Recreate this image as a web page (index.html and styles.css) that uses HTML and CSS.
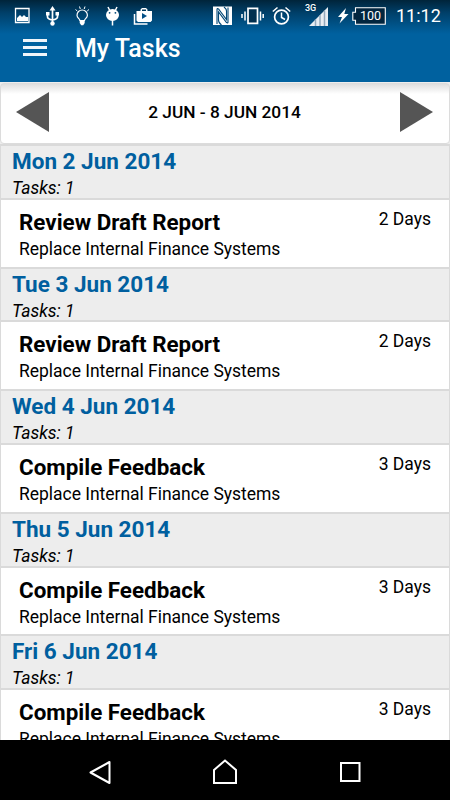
FILE: index.html
```html
<!DOCTYPE html>
<html lang="en">
<head>
    <meta charset="UTF-8">
    <meta name="viewport" content="width=device-width, initial-scale=1.0">
    <title>My Tasks</title>
    <link rel="stylesheet" href="styles.css">
</head>
<body>
    <header class="header">
        <!-- Status bar -->
        <div class="status-bar">
            <svg width="30" height="32" viewBox="0 0 30 32">
                <path d="M8.5 8.5h13.5v14h-13.5z" fill="none" stroke="#fff" stroke-width="1.3"/>
                <path d="M10 21v-3l3-3 2 2 2-2 2 2h2v4z" fill="#fff"/>
            </svg>
            <svg width="30" height="32" viewBox="0 0 30 32">
                <path d="M15.5 9v14M10.5 13v4q0 2 5 3q5-1 5-3v-4" fill="none" stroke="#fff" stroke-width="1.7"/>
                <path d="M15.5 6l3 4.5h-6zM9 12h3.5v3.5h-3.5zM18.5 12h3.5v3.5h-3.5z" fill="#fff"/>
                <circle cx="15.5" cy="23.5" r="2.2" fill="#fff"/>
            </svg>
            <svg width="30" height="32" viewBox="0 0 30 32">
                <path d="M12.9 20.5c0-1.5-2.9-2.5-2.9-5.3a5.2 5.2 0 0 1 10.4 0c0 2.8-2.9 3.8-2.9 5.3z" fill="none" stroke="#fff" stroke-width="1.2"/>
                <path d="M12.7 20h5v3l-1.5 2.2h-2l-1.5-2.2z" fill="#fff"/>
                <path d="M12.5 6.5l.8 2.5M18 6.5l-.8 2.5M8.5 9.5l1.8 1.5M22 9.5l-1.8 1.5" stroke="#fff" stroke-width="1"/>
            </svg>
            <svg width="30" height="32" viewBox="0 0 30 32">
                <path d="M11 7l2 4M20 7l-2 4M15.5 20v5.5" stroke="#fff" stroke-width="1.5"/>
                <ellipse cx="15.5" cy="15" rx="6.5" ry="6" fill="#fff"/>
                <circle cx="12.6" cy="12.8" r=".9" fill="#024777"/>
                <circle cx="18.4" cy="12.8" r=".9" fill="#024777"/>
            </svg>
            <svg width="30" height="32" viewBox="0 0 30 32">
                <path d="M7.5 14v10h13" fill="none" stroke="#fff" stroke-width="1.5"/>
                <path d="M9.5 11h4v-1.5l1.5-1.5h4l1.5 1.5v1.5h4.5v9.5l-1.5 1.5h-12.5l-1.5-1.5zM15 11h4v-1.5h-4z" fill="#fff" fill-rule="evenodd"/>
                <path d="M15 13v6l5-3z" fill="#024f86"/>
            </svg>

            <svg class="nfc" width="19" height="20" viewBox="0 0 19 20">
                <path d="M0 .5h19v18.5H0z" fill="#fff"/>
                <path d="M4 18V3.500q0-1.500 1.500-.5l8 10.500V5q0-2-2.500-4M15 1.500V16q0 1.500-1.500.5L5.500 6v8q0 3 3 5" fill="none" stroke="#034877" stroke-width="1.1"/>
            </svg>
            <svg class="vibrate" width="23" height="20" viewBox="0 0 23 20">
                <path d="M7 2.3h9.500v15h-9.500z" fill="#02304f" stroke="#fff" stroke-width="1.7"/>
                <path d="M1 8v4M4 5.500v9M19.500 5.500v9M22.200 8v4" stroke="#fff" stroke-width="1.5"/>
            </svg>
            <svg class="alarm" width="19" height="20" viewBox="0 0 19 20">
                <circle cx="9.5" cy="11" r="6.9" fill="none" stroke="#fff" stroke-width="1.7"/>
                <path d="M9.5 6.500v5l3.500 2M.8 5.500l4.700-4M18.200 5.500l-4.700-4" fill="none" stroke="#fff" stroke-width="1.5"/>
            </svg>
            <div class="signal">
                <span class="network">3G</span>
                <svg width="20" height="20" viewBox="0 0 20 20">
                    <path d="M0 20L19 1v19z" fill="#e8edf2"/>
                    <path d="M6.5 13.500v6.500M11 9v11M15.500 4.500v15.500" stroke="#93a9bc" stroke-width="1.5"/>
                </svg>
            </div>
            <svg class="bolt" width="11" height="16" viewBox="0 0 11 16">
                <path d="M8 0L0 9h4l-2.500 6.500L10.500 6h-4.200z" fill="#fff"/>
            </svg>
            <div class="battery">
                <svg width="34" height="18" viewBox="0 0 34 18">
                    <path d="M3.500.7h29.800v16.500H3.500v-4H.8v-8h2.700z" fill="#02253e" stroke="#fff" stroke-width="1.1"/>
                </svg>
                <span class="level">100</span>
            </div>
            <span class="clock">11:12</span>
        </div>

        <!-- Title bar -->
        <div class="title-bar">
            <div class="menu">
                <span></span>
                <span></span>
                <span></span>
            </div>
            <h1>My Tasks</h1>
        </div>
    </header>

    <main class="content">
        <div class="week">
            <svg width="33" height="40" viewBox="0 0 33 40"><path d="M0 20L33 0v40z" fill="#555"/></svg>
            <span class="range">2 JUN - 8 JUN 2014</span>
            <svg width="33" height="40" viewBox="0 0 33 40"><path d="M33 20L0 0v40z" fill="#555"/></svg>
        </div>

        <div class="list">
            <div class="day">
                <h2>Mon 2 Jun 2014</h2>
                <p>Tasks: 1</p>
            </div>
            <div class="task">
                <div>
                    <h3>Review Draft Report</h3>
                    <p>Replace Internal Finance Systems</p>
                </div>
                <span class="duration">2 Days</span>
            </div>

            <div class="day">
                <h2>Tue 3 Jun 2014</h2>
                <p>Tasks: 1</p>
            </div>
            <div class="task">
                <div>
                    <h3>Review Draft Report</h3>
                    <p>Replace Internal Finance Systems</p>
                </div>
                <span class="duration">2 Days</span>
            </div>

            <div class="day">
                <h2>Wed 4 Jun 2014</h2>
                <p>Tasks: 1</p>
            </div>
            <div class="task">
                <div>
                    <h3>Compile Feedback</h3>
                    <p>Replace Internal Finance Systems</p>
                </div>
                <span class="duration">3 Days</span>
            </div>

            <div class="day">
                <h2>Thu 5 Jun 2014</h2>
                <p>Tasks: 1</p>
            </div>
            <div class="task">
                <div>
                    <h3>Compile Feedback</h3>
                    <p>Replace Internal Finance Systems</p>
                </div>
                <span class="duration">3 Days</span>
            </div>

            <div class="day">
                <h2>Fri 6 Jun 2014</h2>
                <p>Tasks: 1</p>
            </div>
            <div class="task">
                <div>
                    <h3>Compile Feedback</h3>
                    <p>Replace Internal Finance Systems</p>
                </div>
                <span class="duration">3 Days</span>
            </div>
        </div>
    </main>

    <!-- Android buttons -->
    <nav class="nav-bar">
        <svg width="22" height="25" viewBox="0 0 22 25"><path d="M1.5 12.500L20.500 2v21z" fill="none" stroke="#fff" stroke-width="2" stroke-linejoin="round"/></svg>
        <svg width="26" height="26" viewBox="0 0 26 26"><path d="M2 11L13 1.500l11 9.500V24H2z" fill="none" stroke="#fff" stroke-width="2"/></svg>
        <svg width="22" height="20" viewBox="0 0 22 20"><rect x="2" y="1" width="18.5" height="18" fill="none" stroke="#fff" stroke-width="2"/></svg>
    </nav>
</body>
</html>
```
FILE: styles.css
```css
* {
    box-sizing: border-box;
}

body {
    display: flex;
    flex-direction: column;
    width: 450px;
    height: 800px;
    margin: 0;
    overflow: hidden;
    font-family: Roboto, sans-serif;
    color: #000;
    background: #ededed;
}

h1, h2, h3, p {
    margin: 0;
}

svg {
    display: block;
    flex-shrink: 0;
}

/* Header */
.header {
    height: 82px;
    flex-shrink: 0;
    color: #fff;
    background: linear-gradient(#00243a 0, #00406a 13px, #00619f 34px);
}

.status-bar {
    display: flex;
    align-items: center;
    height: 32px;
    padding: 0 10px 0 7px;
}

.nfc {
    margin-left: auto;
}

.vibrate {
    margin-left: 9px;
}

.alarm {
    margin-left: 8px;
}

.signal {
    display: flex;
    width: 25px;
    margin-left: 13px;
    padding-left: 5px;
    position: relative;
}

.network {
    position: absolute;
    left: 1px;
    top: -3px;
    font-size: 9px;
    line-height: 10px;
    font-weight: 500;
}

.bolt {
    margin-left: 9px;
}

.battery {
    position: relative;
    margin-left: 3px;
}

.level {
    position: absolute;
    left: 4px;
    top: 0;
    width: 29px;
    font-size: 12.5px;
    line-height: 18px;
    text-align: center;
}

.clock {
    width: 44px;
    margin-left: 10px;
    font-size: 18px;
    line-height: 32px;
    white-space: nowrap;
}

.title-bar {
    display: flex;
    align-items: center;
    height: 34px;
    padding-left: 23px;
}

.menu {
    display: flex;
    flex-direction: column;
    gap: 4px;
    width: 24px;
    margin-right: 28px;
    padding-bottom: 3px;
}

.menu span {
    height: 3px;
    background: #f0f5fa;
}

h1 {
    font-size: 25px;
    line-height: 32px;
    font-weight: 500;
}

/* Week picker */
.content {
    flex: 1;
    min-height: 0;
    overflow: hidden;
}

.week {
    display: flex;
    align-items: center;
    justify-content: space-between;
    height: 61px;
    margin-top: 1px;
    padding: 0 16px 3px 15px;
    border: 1px solid #dcdcdc;
    border-radius: 4px;
    background: linear-gradient(#dedede, #fff 10px);
}

.range {
    font-size: 17.3px;
    font-weight: 500;
}

/* Task list */
.list {
    border: solid #dadada;
    border-width: 0 1px;
}

.day {
    height: 53.8px;
    padding: 1px 11px 0;
    background: #ededed;
    border-top: 2px solid #dadada;
}

.day h2 {
    font-size: 22.5px;
    line-height: 28px;
    color: #005f9f;
}

.day p {
    font-size: 17.5px;
    line-height: 26px;
    font-style: italic;
}

.task {
    display: flex;
    justify-content: space-between;
    height: 68.8px;
    padding: 8px 18px 0;
    background: #fff;
    border-top: 2px solid #dadada;
}

.task h3 {
    font-size: 22.4px;
    line-height: 28px;
}

.task p {
    font-size: 17.5px;
    line-height: 26px;
    letter-spacing: -0.03px;
}

.duration {
    font-size: 17.5px;
    line-height: 22px;
}

/* Bottom buttons */
.nav-bar {
    display: flex;
    align-items: center;
    justify-content: space-between;
    height: 60px;
    flex-shrink: 0;
    padding: 4px 89px 0;
    background: #000;
}
```
